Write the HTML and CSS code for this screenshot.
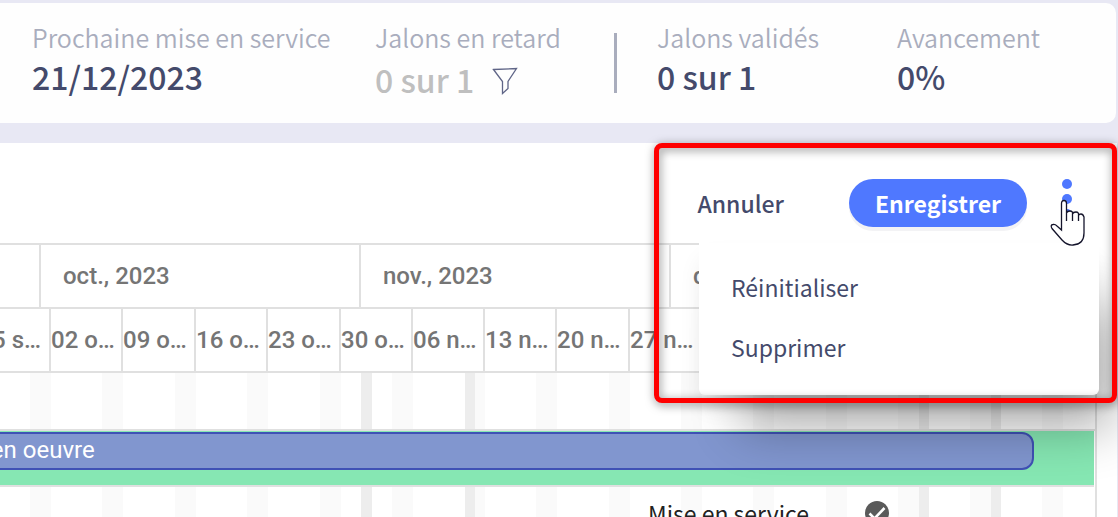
FILE: index.html
```
<!DOCTYPE html>
<html lang="fr">
<head>
<meta charset="utf-8">
<title>Planning</title>
<link rel="stylesheet" href="styles.css">
</head>
<body>
<header class="summary">
  <dl class="stat stat-next"><dt>Prochaine mise en service</dt><dd>21/12/2023</dd></dl>
  <dl class="stat stat-late">
    <dt>Jalons en retard</dt>
    <dd class="muted">0 sur 1
      <button class="filter" type="button" aria-label="Filtrer">
        <svg width="26" height="28" viewBox="0 0 26 28"><path d="M1.5 2.5 24.500 1.500 16 14.500V21.500L10.500 26.500V14.500Z" fill="none" stroke="#5f6587" stroke-width="1.300"/></svg>
      </button>
    </dd>
  </dl>
  <div class="divider"></div>
  <dl class="stat stat-valid"><dt>Jalons validés</dt><dd>0 sur 1</dd></dl>
  <dl class="stat"><dt>Avancement</dt><dd>0%</dd></dl>
</header>

<main class="panel">
  <div class="toolbar">
    <button class="cancel" type="button">Annuler</button>
    <button class="save" type="button">Enregistrer</button>
    <div class="more">
      <button class="dots" type="button" aria-label="Plus d'actions">
        <svg width="10" height="40" viewBox="0 0 10 40" fill="#4f78ff"><circle cx="5" cy="5" r="5"/><circle cx="5" cy="20" r="5"/><circle cx="5" cy="35" r="5"/></svg>
      </button>
      <svg class="pointer" width="36" height="48" viewBox="0 0 36 48"><path d="M11.500 31V4.500Q11.500 1.500 14 1.500T16.500 4.500V14Q17 12 20 12T22.500 15Q23 13 26 13T28.500 16.500Q29 15 31 15T34 18V34Q34 45.500 23 46Q17 46.500 12 41L2 29.500Q0 26 3 25.500Q5 25 7 27L11.500 31ZM16.500 13V22M22.500 15V22M28.500 16V22" fill="#fff" stroke="#14142b" stroke-width="1.300"/></svg>
      <div class="menu">
        <button type="button">Réinitialiser</button>
        <button type="button">Supprimer</button>
      </div>
    </div>
  </div>

  <div class="gantt">
    <div class="months"><span></span><span>oct., 2023</span><span>nov., 2023</span><span>déc.</span></div>
    <div class="cols weeks"><span class="cut">25 s…</span><span>02 o…</span><span>09 o…</span><span>16 o…</span><span>23 o…</span><span>30 o…</span><span>06 n…</span><span>13 n…</span><span>20 n…</span><span>27 n…</span><span></span><span></span><span></span><span></span><span></span><span></span></div>
    <div class="cols row"><i></i><i></i><i></i><i></i><i></i><i class="off-mid"></i><i class="off-end"></i><i></i><i></i><i></i><i></i><i></i><i></i><i class="off-start"></i><i class="off-start"></i><i class="last"></i></div>
    <div class="row task"><div class="bar">Mise en oeuvre</div></div>
    <div class="cols row milestones"><i></i><i></i><i></i><i></i><i></i><i class="off-mid"></i><i class="off-end"></i><i></i><i></i><i></i><i></i><i></i><i></i><i class="off-start"></i><i class="off-start"></i><i class="last"></i>
      <div class="milestone"><span>Mise en service</span>
        <svg width="24" height="24" viewBox="0 0 24 24"><circle cx="12" cy="12" r="12" fill="#5a5a5a"/><path d="M4.500 12.500 9.500 17.500 19.500 7" fill="none" stroke="#fff" stroke-width="2.600"/></svg>
      </div>
    </div>
  </div>
  <div class="highlight"></div>
</main>
</body>
</html>
```
FILE: styles.css
```
* { box-sizing: border-box; }
body {
  margin: 0;
  padding-top: 3px;
  height: 100vh;
  overflow: hidden;
  display: flex;
  flex-direction: column;
  gap: 20px;
  background: #e8e8f4;
  font-family: "Noto Sans CJK SC", "Noto Sans", sans-serif;
  color: #444a6b;
}
button {
  border: 0;
  padding: 0;
  background: none;
  font: inherit;
  color: inherit;
  cursor: pointer;
}
svg { display: block; }

.summary {
  flex: none;
  display: flex;
  height: 120px;
  margin-right: 2px;
  padding: 14px 32px;
  background: #fefefe;
  border-radius: 0 10px 10px 0;
}
.stat { margin: 0; white-space: nowrap; }
.stat dt { font-size: 25px; line-height: 40px; font-weight: 350; color: #a9adbd; }
.stat dd { display: flex; align-items: center; gap: 18px; margin: 0; font-size: 32px; line-height: 38px; font-weight: 500; }
.stat dd.muted { color: #bfbfbf; padding-top: 3px; }
.filter { padding-top: 4px; }
.stat-next { width: 343px; }
.stat-late { width: 239px; }
.stat-valid { width: 240px; }
.divider { width: 3px; height: 60px; margin: 16px 40px 0 0; background: #a9adbd; }

.panel {
  position: relative;
  flex: 1;
  min-height: 0;
  display: flex;
  flex-direction: column;
  margin-right: 1px;
  background: #fff;
}
.toolbar {
  flex: none;
  display: flex;
  justify-content: flex-end;
  align-items: flex-start;
  height: 100px;
  padding: 36px 45px 0 0;
  font-size: 23px;
  font-weight: 500;
}
.cancel { height: 48px; margin-right: 65px; }
.save {
  height: 48px;
  width: 178px;
  margin-right: 35px;
  border-radius: 24px;
  background: #4f78ff;
  box-shadow: 0 4px 0 #f3f3f5;
  color: #fff;
  font-weight: 700;
}
.more { position: relative; z-index: 2; }
.dots { display: block; }
.pointer { position: absolute; z-index: 3; left: -12px; top: 20px; }
.menu {
  position: absolute;
  right: -27px;
  top: 64px;
  width: 400px;
  padding: 14px 0 18px;
  border-radius: 0 0 6px 6px;
  background: #fff;
  box-shadow: 28px 48px 50px -14px rgba(0, 0, 0, .3), 0 14px 24px -6px rgba(0, 0, 0, .12);
}
.menu button {
  display: block;
  width: 100%;
  padding: 0 32px;
  font-size: 23px;
  line-height: 60px;
  font-weight: 400;
  text-align: left;
}

.gantt {
  flex: 1;
  min-height: 0;
  display: flex;
  flex-direction: column;
  overflow: hidden;
  width: calc(100% - 20px);
  border-top: 2px solid #e0e0e0;
  border-right: 2px solid #e0e0e0;
  font-family: Roboto, sans-serif;
}
.months, .cols { flex: none; display: grid; height: 64px; border-bottom: 2px solid #e0e0e0; }
.months { grid-template-columns: 41px 320px 310px 1fr; }
.cols { grid-template-columns: 51px 72px 73px 72px 73px 72px 72px 72px 73px 72px 72px 73px 72px 72px 72px 1fr; }
.months span, .weeks span {
  border-right: 2px solid #e0e0e0;
  font-size: 24px;
  line-height: 62px;
  font-weight: 500;
  color: #757575;
  white-space: nowrap;
}
.months span { padding-left: 22px; }
.weeks .cut { display: flex; justify-content: flex-end; padding-right: 8px; }
.months span:last-child, .weeks span:last-child { border-right: 0; }
.row { flex: none; height: 58px; border-bottom: 2px solid #e0e0e0; }
.row i { background: linear-gradient(#fafafa, #fafafa) right / 21px 100% no-repeat; }
.row i.last { background: none; }
.row .off-mid { background: linear-gradient(#ededed, #ededed) 20px 0 / 11px 100% no-repeat, linear-gradient(#fafafa, #fafafa) right / 21px 100% no-repeat; }
.row .off-end { background: linear-gradient(90deg, #ededed 50%, #fafafa 50%) right / 20px 100% no-repeat; }
.row .off-start { background: linear-gradient(#ededed, #ededed) left / 10px 100% no-repeat, linear-gradient(#fafafa, #fafafa) right / 21px 100% no-repeat; }
.row.task { height: 56px; margin-right: 1px; padding-top: 1px; background: #86e7b3; }
.bar {
  height: 38px;
  margin: 0 60px 0 -69px;
  border: 2px solid #3f51b5;
  border-radius: 0 12px 12px 0;
  background: #8196cf;
  color: #fff;
  font-size: 24px;
  line-height: 32px;
}
.milestones { position: relative; }
.milestone {
  position: absolute;
  left: 648px;
  top: 6px;
  display: flex;
  align-items: center;
  gap: 56px;
  font: 400 23px/40px "Noto Sans CJK SC", "Noto Sans", sans-serif;
  color: #222;
}
.highlight {
  position: absolute;
  z-index: 4;
  top: 0;
  right: 0;
  width: 463px;
  height: 260px;
  border: 5px solid #f00;
  border-radius: 8px;
  filter: drop-shadow(1px 2px 5px rgba(0, 0, 0, .5));
  pointer-events: none;
}
```
